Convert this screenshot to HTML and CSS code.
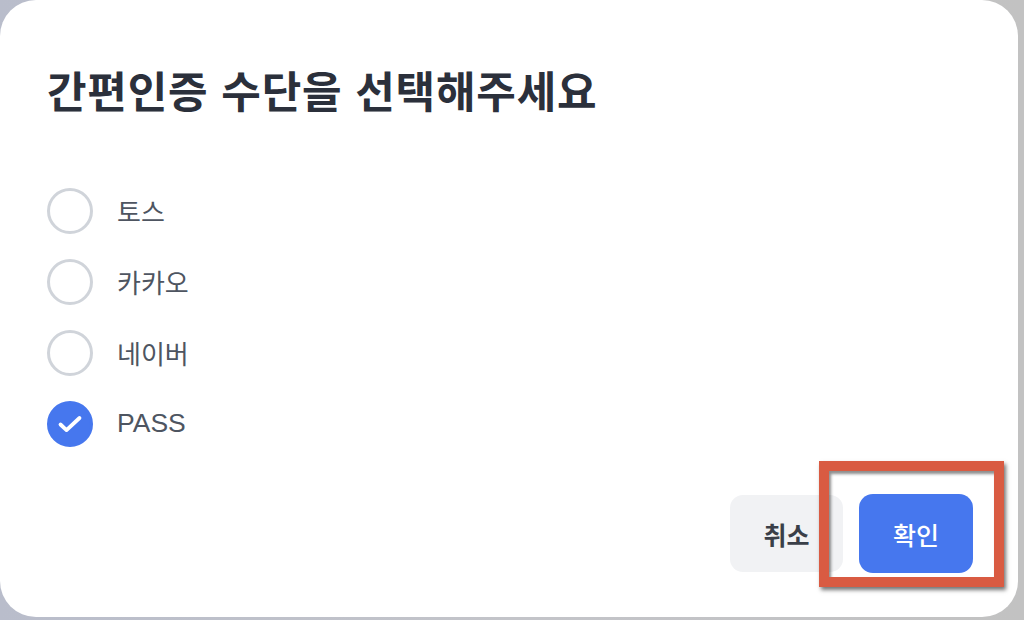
FILE: index.html
```html
<!DOCTYPE html>
<html lang="ko">
<head>
<meta charset="utf-8">
<title>간편인증</title>
<link rel="stylesheet" href="styles.css">
</head>
<body>
<div class="dialog">
  <h1 class="title">간편인증 수단을 선택해주세요</h1>
  <ul class="options">
    <li class="option"><span class="radio"></span><span class="label">토스</span></li>
    <li class="option"><span class="radio"></span><span class="label">카카오</span></li>
    <li class="option"><span class="radio"></span><span class="label">네이버</span></li>
    <li class="option"><span class="radio checked"><svg viewBox="0 0 28 28" width="28" height="28"><path d="M4.5 14.5l6 5.6L23.5 8" fill="none" stroke="#fff" stroke-width="3.8" stroke-linecap="round" stroke-linejoin="round"/></svg></span><span class="label latin">PASS</span></li>
  </ul>
  <div class="footer">
    <button class="btn cancel">취소</button>
    <button class="btn confirm">확인</button>
  </div>
  <div class="highlight"></div>
</div>
</body>
</html>
```

FILE: styles.css
```css
html, body {
  margin: 0;
  padding: 0;
}
body {
  width: 1024px;
  height: 620px;
  background: linear-gradient(90deg, #b9bdcb 0%, #c3c4c9 50%, #c2c2c2 100%);
  font-family: "Noto Sans CJK KR", "Noto Sans", sans-serif;
  overflow: hidden;
}
.dialog {
  position: relative;
  box-sizing: border-box;
  width: 1018px;
  height: 617px;
  background: #fff;
  border-radius: 36px;
  display: flex;
  flex-direction: column;
  padding: 61px 45px 44px 47px;
}
.title {
  margin: 0;
  font-size: 43px;
  line-height: 56px;
  font-weight: 700;
  color: #2b303b;
  letter-spacing: 0.8px;
}
.options {
  list-style: none;
  margin: 58px 0 0;
  padding: 0;
  display: flex;
  flex-direction: column;
}
.option {
  display: flex;
  align-items: center;
  height: 71px;
  gap: 24px;
}
.radio {
  box-sizing: border-box;
  width: 46px;
  height: 46px;
  border-radius: 50%;
  border: 3px solid #d0d4da;
  display: flex;
  align-items: center;
  justify-content: center;
  flex: none;
}
.radio.checked {
  background: #4677ee;
  border-color: #4677ee;
}
.label {
  font-size: 26px;
  color: #4e5561;
  font-weight: 400;
}
.label.latin {
  font-family: "Liberation Sans", "Noto Sans CJK KR", sans-serif;
  font-size: 26.5px;
}
.footer {
  margin-top: auto;
  display: flex;
  justify-content: flex-end;
  align-items: center;
  gap: 16px;
}
.btn {
  border: none;
  font-family: "Noto Sans CJK KR", sans-serif;
  font-size: 25px;
  cursor: pointer;
}
.cancel {
  width: 113px;
  height: 77px;
  border-radius: 13px;
  background: #f1f2f4;
  color: #3a3f48;
  font-weight: 700;
}
.confirm {
  width: 114px;
  height: 79px;
  border-radius: 14px;
  background: #4677ee;
  color: #fff;
  font-weight: 500;
}
.highlight {
  position: absolute;
  left: 819px;
  top: 461px;
  width: 185px;
  height: 126px;
  box-sizing: border-box;
  border: 10px solid #d95b42;
  box-shadow: 2px 3px 4px rgba(0, 0, 0, 0.55), inset 2px 3px 3px rgba(0, 0, 0, 0.45);
  pointer-events: none;
}
```
